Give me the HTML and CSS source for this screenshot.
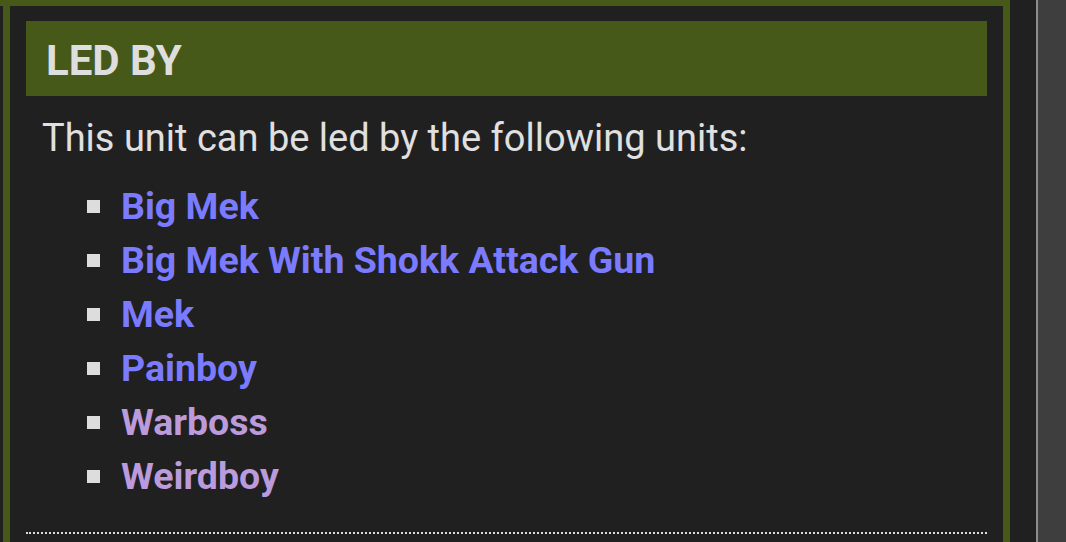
FILE: index.html
```html
<!DOCTYPE html>
<html lang="en">
<head>
<meta charset="utf-8">
<title>Led By</title>
<link rel="stylesheet" href="styles.css">
</head>
<body>
<div class="layout">
  <div class="frame">
    <section class="panel">
      <h2 class="panel-title">LED BY</h2>
      <p class="intro">This unit can be led by the following units:</p>
      <ul class="unit-list">
        <li><a class="unit-link" href="#">Big Mek</a></li>
        <li><a class="unit-link" href="#">Big Mek With Shokk Attack Gun</a></li>
        <li><a class="unit-link" href="#">Mek</a></li>
        <li><a class="unit-link" href="#">Painboy</a></li>
        <li><a class="unit-link visited" href="#">Warboss</a></li>
        <li><a class="unit-link visited" href="#">Weirdboy</a></li>
      </ul>
      <div class="divider"></div>
    </section>
  </div>
  <div class="gutter"></div>
  <div class="scrollbar"></div>
</div>
</body>
</html>
```
FILE: styles.css
```css
html, body {
  margin: 0;
  padding: 0;
  height: 100%;
  background: #202020;
  overflow: hidden;
}

body {
  font-family: Roboto, "Liberation Sans", sans-serif;
  color: #dddddd;
}

.layout {
  display: flex;
  height: 542px;
}

.frame {
  width: 1010px;
  flex: none;
  border-top: 6px solid #475919;
  box-sizing: border-box;
  display: flex;
}

.panel {
  flex: 1;
  margin-left: 3px;
  border-left: 7px solid #475919;
  border-right: 7px solid #475919;
  padding: 15px 16px 0;
  background: #202020;
}

.panel-title {
  margin: 0;
  height: 75px;
  box-sizing: border-box;
  padding: 6px 20px 0;
  background: #475919;
  color: #dedede;
  font-size: 42px;
  font-weight: 700;
  line-height: 68px;
}

.intro {
  margin: 20px 0 0 16px;
  font-size: 38px;
  font-weight: 400;
  line-height: 44.5px;
  color: #e0e0e0;
}

.unit-list {
  list-style: none;
  margin: 18px 0 0;
  padding: 0 0 0 61px;
}

.unit-list li {
  display: flex;
  align-items: center;
  gap: 21px;
  height: 54px;
  font-size: 37.5px;
  font-weight: 700;
  line-height: 54px;
}

.unit-list li::before {
  content: "";
  width: 13px;
  height: 13px;
  background: #dddddd;
  flex: none;
  margin-top: 2px;
}

.unit-link {
  color: #7b7bff;
  text-decoration: none;
}

.unit-link.visited {
  color: #bb9bdb;
}

.divider {
  margin-top: 29px;
  border-top: 2px dotted #dddddd;
}

.gutter {
  width: 26px;
  flex: none;
}

.scrollbar {
  flex: 1;
  border-left: 2px solid #8c8c8c;
  background: #3e3e3e;
}
```
